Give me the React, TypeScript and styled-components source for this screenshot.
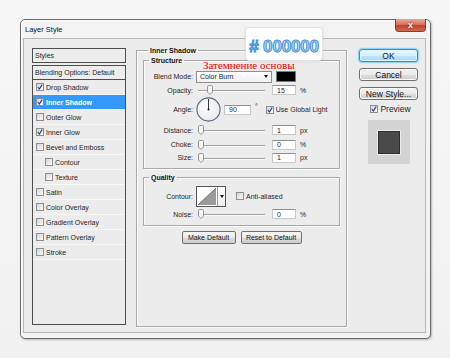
import styled, { createGlobalStyle } from 'styled-components'

const GlobalStyle = createGlobalStyle`
  html, body {
    margin: 0;
    padding: 0;
    background: #f3f3f3;
  }
  body {
    font-family: "Liberation Sans", Arial, sans-serif;
    color: #1e1e1e;
  }
`

const Page = styled.div`
  width: 450px;
  height: 358px;
  box-sizing: border-box;
  padding: 19px 0 0 20px;
  background: linear-gradient(180deg, #f7f7f7 0%, #f1f1f1 100%);
  overflow: hidden;
`

const Dialog = styled.div`
  position: relative;
  width: 411px;
  height: 320px;
  box-sizing: border-box;
  border: 1px solid #6a6a6a;
  border-radius: 5px;
  padding: 0 4px 5px 2px;
  background: #f3f3f3;
  box-shadow: 1px 1px 2px rgba(0, 0, 0, 0.25), inset 1px 1px 0 #fdfdfd;
  display: flex;
  flex-direction: column;
`

const TitleBar = styled.div`
  height: 18px;
  display: flex;
  align-items: center;
  padding-left: 2px;
  font-size: 7.5px;
  color: #111;
`

const CloseButton = styled.div`
  margin-left: auto;
  align-self: flex-start;
  margin-top: -1px;
  width: 31px;
  height: 13px;
  box-sizing: border-box;
  border: 1px solid #8c3b2c;
  border-top: none;
  border-radius: 0 0 4px 4px;
  background: linear-gradient(180deg, #e9a898 0%, #d97462 45%, #c2402a 55%, #cf6b57 100%);
  display: flex;
  align-items: center;
  justify-content: center;
  color: #fff;
  font-weight: bold;
  font-size: 9px;
  text-shadow: 0 0 2px #6a1e10;
`

const Body = styled.div`
  flex: 1;
  border: 1px solid #b7b7b7;
  background: #ececec;
  display: flex;
  align-items: flex-start;
  padding: 9px 0 0 8px;
`

const StyleColumn = styled.div`
  width: 94px;
  height: 277px;
  display: flex;
  flex-direction: column;
  font-size: 7px;
`

const HeaderCell = styled.div<{ $gap?: number }>`
  height: 15px;
  box-sizing: border-box;
  border: 1px solid #4d4d4d;
  margin-top: ${p => p.$gap ?? 0}px;
  padding-left: 2px;
  display: flex;
  align-items: center;
  background: #ededed;
`

const ListBox = styled.div`
  flex: 1;
  border: 1px solid #4d4d4d;
  border-top: none;
  background: #ececec;
`

const ListRow = styled.div<{ $indent?: boolean; $active?: boolean }>`
  height: 15px;
  box-sizing: border-box;
  border-bottom: 1px solid #f8f8f8;
  display: flex;
  align-items: center;
  gap: 2px;
  padding-left: ${p => (p.$indent ? 12 : 3)}px;
  background: ${p => (p.$active ? '#3399ff' : 'transparent')};
  color: ${p => (p.$active ? '#fff' : '#1e1e1e')};
  font-weight: ${p => (p.$active ? 'bold' : 'normal')};
`

const Box = styled.span`
  width: 6px;
  height: 6px;
  flex: none;
  border: 1px solid #8e8e8e;
  background: linear-gradient(135deg, #d6d6d6, #fafafa);
  display: inline-flex;
  align-items: center;
  justify-content: center;
`

const CheckBox = ({ on }: { on?: boolean }) => (
  <Box>
    {on && (
      <svg width="6" height="6" viewBox="0 0 6 6">
        <path d="M0.8 3 L2.3 5 L5.2 0.6" fill="none" stroke="#1d3b8c" strokeWidth="1.1" />
      </svg>
    )}
  </Box>
)

const MainColumn = styled.div`
  margin-left: 10px;
  margin-top: -2px;
`

const Group = styled.fieldset<{ $h?: number; $top?: number }>`
  margin: ${p => p.$top ?? 0}px 0 0 0;
  padding: 0 6px;
  box-sizing: border-box;
  ${p => (p.$h ? `height: ${p.$h}px;` : '')}
  border: 1px solid #a9a9a9;
  box-shadow: inset 1px 1px 0 #fbfbfb, 1px 1px 0 #fbfbfb;
  min-width: 0;
`

const Legend = styled.legend`
  margin-left: 5px;
  padding: 0 2px;
  font-size: 7px;
  line-height: 9px;
  font-weight: bold;
  color: #111;
`

const SubGroup = styled.fieldset<{ $top?: number }>`
  margin: ${p => p.$top ?? 0}px 0 0 0;
  padding: 0 0 4px 0;
  border: 1px solid #a9a9a9;
  box-shadow: inset 1px 1px 0 #fbfbfb, 1px 1px 0 #fbfbfb;
  min-width: 0;
`

const Row = styled.div<{ $h: number; $top?: number }>`
  height: ${p => p.$h}px;
  margin-top: ${p => p.$top ?? 0}px;
  display: flex;
  align-items: center;
  font-size: 7px;
`

const Label = styled.span`
  width: 49px;
  margin-right: 3px;
  text-align: right;
  flex: none;
`

const Select = styled.div`
  width: 76px;
  height: 12px;
  box-sizing: border-box;
  border: 1px solid #8d8d8d;
  background: linear-gradient(180deg, #ffffff, #f2f2f2);
  display: flex;
  align-items: center;
  padding: 0 3px;
  justify-content: space-between;
`

const Arrow = styled.span`
  width: 0;
  height: 0;
  border-left: 2.5px solid transparent;
  border-right: 2.5px solid transparent;
  border-top: 3px solid #111;
`

const Swatch = styled.div`
  width: 20px;
  height: 11px;
  margin-left: 4px;
  background: #000;
  border: 1px solid #7a7a7a;
  box-sizing: border-box;
`

const Track = styled.div`
  position: relative;
  width: 67px;
  height: 10px;
  margin: 0 7px 0 2px;
  &::before {
    content: '';
    position: absolute;
    left: 0;
    right: 0;
    top: 5px;
    height: 1px;
    background: #a2a2a2;
    box-shadow: 0 1px 0 #fafafa;
  }
`

const Thumb = styled.svg`
  position: absolute;
  top: 0;
`

const Slider = ({ at }: { at: number }) => (
  <Track>
    <Thumb width="6" height="10" viewBox="0 0 6 10" style={{ left: at }}>
      <path
        d="M0.5 1.5 Q0.5 0.5 1.5 0.5 H4.5 Q5.5 0.5 5.5 1.5 V7 L3 9.5 L0.5 7 Z"
        fill="#f4f4f4"
        stroke="#7d7d7d"
        strokeWidth="0.8"
      />
    </Thumb>
  </Track>
)

const Field = styled.div<{ $w?: number }>`
  width: ${p => p.$w ?? 24}px;
  height: 10px;
  box-sizing: border-box;
  border: 1px solid #c8c8c8;
  border-top-color: #8e8e8e;
  background: #fff;
  padding-left: 4px;
  display: flex;
  align-items: center;
  font-size: 7px;
  flex: none;
`

const Unit = styled.span<{ $up?: boolean }>`
  margin-left: 4px;
  align-self: ${p => (p.$up ? 'flex-start' : 'center')};
  margin-top: ${p => (p.$up ? 6 : 0)}px;
`

const CheckLabel = styled.span<{ $left?: number }>`
  display: inline-flex;
  align-items: center;
  gap: 2px;
  margin-left: ${p => p.$left ?? 0}px;
`

const Dial = () => (
  <svg width="25" height="25" viewBox="0 0 25 25">
    <defs>
      <radialGradient id="dialFill" cx="40%" cy="35%" r="70%">
        <stop offset="0%" stopColor="#ffffff" />
        <stop offset="100%" stopColor="#e6e8ec" />
      </radialGradient>
    </defs>
    <circle cx="12.5" cy="12.5" r="11.6" fill="url(#dialFill)" stroke="#56627c" strokeWidth="1.1" />
    <line x1="12.5" y1="12.5" x2="12.5" y2="2" stroke="#222" strokeWidth="0.9" />
    <circle cx="12.5" cy="12.5" r="1" fill="#111" />
  </svg>
)

const ContourBox = styled.div`
  display: flex;
  height: 21px;
  box-sizing: border-box;
  border: 1px solid #555;
  background: #fff;
`

const ContourDrop = styled.div`
  width: 7px;
  border-left: 1px solid #9a9a9a;
  background: linear-gradient(180deg, #ffffff, #ededed);
  display: flex;
  align-items: center;
  justify-content: center;
`

const ButtonRow = styled.div`
  display: flex;
  justify-content: center;
  gap: 5px;
  margin-top: 5px;
`

const SmallButton = styled.div<{ $w: number }>`
  width: ${p => p.$w}px;
  height: 13px;
  box-sizing: border-box;
  border: 1px solid #707070;
  border-radius: 2px;
  background: linear-gradient(180deg, #f6f6f6 0%, #e9e9e9 50%, #dbdbdb 51%, #cfcfcf 100%);
  display: flex;
  align-items: center;
  justify-content: center;
  font-size: 7px;
  color: #111;
`

const RightColumn = styled.div`
  width: 59px;
  margin-left: 12px;
  margin-top: 1px;
  display: flex;
  flex-direction: column;
  align-items: center;
`

const DialogButton = styled.div<{ $primary?: boolean }>`
  width: 59px;
  height: 13px;
  box-sizing: border-box;
  margin-bottom: 6px;
  border: 1px solid ${p => (p.$primary ? '#3b8ccf' : '#707070')};
  border-radius: 3px;
  background: ${p =>
    p.$primary
      ? 'linear-gradient(180deg, #eaf6fd 0%, #d9f0fc 50%, #bee6fd 51%, #a7d9f5 100%)'
      : 'linear-gradient(180deg, #f2f2f2 0%, #ebebeb 50%, #dddddd 51%, #cfcfcf 100%)'};
  box-shadow: ${p => (p.$primary ? '0 0 1px 1px #88d0f5, inset 0 0 0 1px #dff3fd' : 'inset 0 0 0 1px #fafafa')};
  display: flex;
  align-items: center;
  justify-content: center;
  font-size: 8.5px;
  color: #111;
`

const PreviewCheck = styled.div`
  margin-top: -3px;
  height: 12px;
  display: flex;
  align-items: center;
  gap: 2px;
  font-size: 8.5px;
  margin-left: 4px;
`

const PreviewBox = styled.div`
  margin-top: 5px;
  width: 42px;
  height: 44px;
  background: #d3d3d3;
  display: flex;
  align-items: center;
  justify-content: center;
`

const PreviewSquare = styled.div`
  width: 22px;
  height: 23px;
  box-sizing: border-box;
  background: #4a4a4a;
  border: 1px solid #2e2e2e;
  box-shadow: 0 0 0 1px #ececec;
`

const Callout = styled.div`
  position: absolute;
  left: 224px;
  top: 7px;
  width: 78px;
  height: 34px;
  box-sizing: border-box;
  border: 1px solid #e2e2e2;
  border-radius: 4px;
  background: #fff;
  box-shadow: 0 1px 2px rgba(0, 0, 0, 0.12);
  display: flex;
  align-items: center;
  justify-content: center;
  padding-top: 6px;
  font-family: "Liberation Sans", Arial, sans-serif;
  font-weight: bold;
  font-size: 17px;
  letter-spacing: -0.2px;
  color: #b8dcf8;
  -webkit-text-stroke: 1px #3f8fd9;
`

const Note = styled.div`
  position: absolute;
  left: 182px;
  top: 40px;
  font-family: "Liberation Serif", "Times New Roman", serif;
  font-size: 11px;
  line-height: 11px;
  color: #f00000;
  white-space: nowrap;
`

const styles: { name: string; on?: boolean; indent?: boolean; active?: boolean }[] = [
  { name: 'Drop Shadow', on: true },
  { name: 'Inner Shadow', on: true, active: true },
  { name: 'Outer Glow' },
  { name: 'Inner Glow', on: true },
  { name: 'Bevel and Emboss' },
  { name: 'Contour', indent: true },
  { name: 'Texture', indent: true },
  { name: 'Satin' },
  { name: 'Color Overlay' },
  { name: 'Gradient Overlay' },
  { name: 'Pattern Overlay' },
  { name: 'Stroke' },
]

export default function App() {
  return (
    <>
      <GlobalStyle />
      <Page>
        <Dialog>
          <TitleBar>
            Layer Style
            <CloseButton>x</CloseButton>
          </TitleBar>
          <Body>
            <StyleColumn>
              <HeaderCell>Styles</HeaderCell>
              <HeaderCell $gap={2}>Blending Options: Default</HeaderCell>
              <ListBox>
                {styles.map(s => (
                  <ListRow key={s.name} $indent={s.indent} $active={s.active}>
                    <CheckBox on={s.on} />
                    {s.name}
                  </ListRow>
                ))}
              </ListBox>
            </StyleColumn>

            <MainColumn>
              <Group $h={281} style={{ width: 211 }}>
                <Legend>Inner Shadow</Legend>
                <SubGroup $top={1}>
                  <Legend>Structure</Legend>
                  <Row $h={13} $top={5}>
                    <Label>Blend Mode:</Label>
                    <Select>
                      Color Burn
                      <Arrow />
                    </Select>
                    <Swatch />
                  </Row>
                  <Row $h={14}>
                    <Label>Opacity:</Label>
                    <Slider at={9} />
                    <Field>15</Field>
                    <Unit>%</Unit>
                  </Row>
                  <Row $h={25}>
                    <Label>Angle:</Label>
                    <Dial />
                    <Field $w={27} style={{ marginLeft: 3 }}>
                      90
                    </Field>
                    <Unit $up>°</Unit>
                    <CheckLabel $left={8}>
                      <CheckBox on />
                      Use Global Light
                    </CheckLabel>
                  </Row>
                  <Row $h={16}>
                    <Label>Distance:</Label>
                    <Slider at={0} />
                    <Field>1</Field>
                    <Unit>px</Unit>
                  </Row>
                  <Row $h={13}>
                    <Label>Choke:</Label>
                    <Slider at={0} />
                    <Field>0</Field>
                    <Unit>%</Unit>
                  </Row>
                  <Row $h={13}>
                    <Label>Size:</Label>
                    <Slider at={0} />
                    <Field>1</Field>
                    <Unit>px</Unit>
                  </Row>
                </SubGroup>

                <SubGroup $top={4}>
                  <Legend>Quality</Legend>
                  <Row $h={22} $top={3}>
                    <Label>Contour:</Label>
                    <ContourBox>
                      <svg width="20" height="19" viewBox="0 0 20 19">
                        <path d="M1 18 L19 1 V18 Z" fill="#9a9a9a" />
                        <path d="M1 18 L19 1" stroke="#555" strokeWidth="0.8" />
                      </svg>
                      <ContourDrop>
                        <Arrow />
                      </ContourDrop>
                    </ContourBox>
                    <CheckLabel $left={10}>
                      <CheckBox />
                      Anti-aliased
                    </CheckLabel>
                  </Row>
                  <Row $h={14}>
                    <Label>Noise:</Label>
                    <Slider at={0} />
                    <Field>0</Field>
                    <Unit>%</Unit>
                  </Row>
                </SubGroup>

                <ButtonRow>
                  <SmallButton $w={54}>Make Default</SmallButton>
                  <SmallButton $w={61}>Reset to Default</SmallButton>
                </ButtonRow>
              </Group>
            </MainColumn>

            <RightColumn>
              <DialogButton $primary>OK</DialogButton>
              <DialogButton>Cancel</DialogButton>
              <DialogButton>New Style...</DialogButton>
              <PreviewCheck>
                <CheckBox on />
                Preview
              </PreviewCheck>
              <PreviewBox>
                <PreviewSquare />
              </PreviewBox>
            </RightColumn>
          </Body>

          <Callout># 000000</Callout>
          <Note>Затемнение основы</Note>
        </Dialog>
      </Page>
    </>
  )
}
